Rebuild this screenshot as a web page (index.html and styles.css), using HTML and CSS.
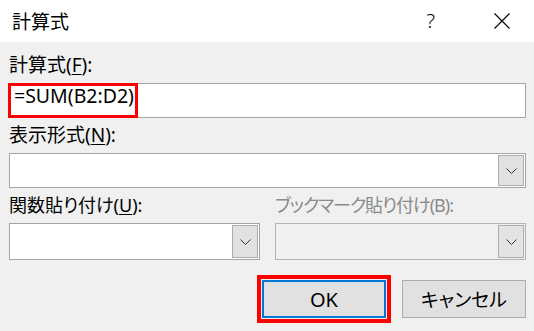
FILE: index.html
```html
<!DOCTYPE html>
<html lang="ja">
<head>
<meta charset="utf-8">
<title>計算式</title>
<link rel="stylesheet" href="styles.css">
</head>
<body>
<div class="dialog">
  <header class="titlebar">
    <span class="title">計算式</span>
    <span class="help">?</span>
    <span class="close"><svg width="16" height="16" viewBox="0 0 16 16"><path d="M0.5 0.5 L15.5 15.5 M15.5 0.5 L0.5 15.5" stroke="#000" stroke-width="1.1" fill="none"/></svg></span>
  </header>
  <main class="content">
    <label class="lbl">計算式(<u>F</u>):</label>
    <div class="field formula">
      <span class="value">=SUM(B2:D2)</span>
      <span class="mark"></span>
    </div>
    <label class="lbl">表示形式(<u>N</u>):</label>
    <div class="field combo">
      <span class="drop"><svg width="11" height="6" viewBox="0 0 11 6"><path d="M0.5 0.5 L5.5 5.5 L10.5 0.5" stroke="#333" stroke-width="1" fill="none"/></svg></span>
    </div>
    <div class="pair">
      <div class="col">
        <label class="lbl small">関数貼り付け(<u>U</u>):</label>
        <div class="field combo tall">
          <span class="drop"><svg width="11" height="6" viewBox="0 0 11 6"><path d="M0.5 0.5 L5.5 5.5 L10.5 0.5" stroke="#333" stroke-width="1" fill="none"/></svg></span>
        </div>
      </div>
      <div class="col disabled">
        <label class="lbl small tight">ブックマーク貼り付け(B):</label>
        <div class="field combo tall">
          <span class="drop"><svg width="11" height="6" viewBox="0 0 11 6"><path d="M0.5 0.5 L5.5 5.5 L10.5 0.5" stroke="#333" stroke-width="1" fill="none"/></svg></span>
        </div>
      </div>
    </div>
    <div class="buttons">
      <div class="focus-mark"><button class="btn default">OK</button></div>
      <button class="btn">キャンセル</button>
    </div>
  </main>
</div>
</body>
</html>
```
FILE: styles.css
```css
html, body {
  margin: 0;
  padding: 0;
}
body {
  width: 534px;
  height: 331px;
  overflow: hidden;
  font-family: "Noto Sans", "Noto Sans CJK JP", sans-serif;
  font-size: 19px;
  font-feature-settings: "palt";
  color: #000;
  background: #f0f0f0;
}
.dialog {
  width: 534px;
  height: 331px;
  background: #f0f0f0;
}
.titlebar {
  height: 42px;
  background: #fff;
  display: flex;
  align-items: center;
  padding-left: 12px;
}
.title {
  flex: 1;
}
.help {
  font-size: 20px;
  font-weight: 300;
  line-height: 20px;
}
.close {
  display: flex;
  margin-left: 59px;
  margin-right: 24px;
}
.content {
  padding: 6px 8px 0 9px;
}
.lbl {
  display: block;
  height: 35px;
  line-height: 35px;
  white-space: nowrap;
}
.lbl.small {
  font-size: 18px;
}
.lbl.tight {
  letter-spacing: -1px;
}
.lbl u {
  text-decoration-thickness: 1px;
  text-underline-offset: 2px;
}
.field {
  box-sizing: border-box;
  height: 35px;
  border: 1px solid #a5a5a5;
  background: #fff;
}
.formula {
  position: relative;
  padding-left: 4px;
}
.formula .value {
  display: block;
  font-size: 19.5px;
  line-height: 24px;
  font-feature-settings: normal;
}
.mark {
  position: absolute;
  left: -2px;
  top: -1px;
  width: 130px;
  height: 35px;
  box-sizing: border-box;
  border: 3px solid #ff0000;
}
.combo {
  display: flex;
  justify-content: flex-end;
  padding: 1px;
}
.combo.tall {
  height: 37px;
}
.drop {
  box-sizing: border-box;
  width: 26px;
  height: 100%;
  border: 1px solid #adadad;
  background: #e1e1e1;
  display: flex;
  align-items: center;
  justify-content: center;
}
.pair {
  display: grid;
  grid-template-columns: 251px 251px;
  column-gap: 15px;
}
.disabled .lbl {
  color: #8a8a8a;
}
.disabled .field {
  background: #f0f0f0;
  border-color: #b4b4b4;
}
.disabled .drop {
  background: #e3e3e3;
}
.buttons {
  display: flex;
  justify-content: flex-end;
  align-items: center;
  gap: 11px;
  margin-top: 15px;
}
.focus-mark {
  box-sizing: border-box;
  width: 134px;
  height: 48px;
  border: 4px solid #ff0000;
  padding: 1px;
}
.btn {
  box-sizing: border-box;
  width: 124px;
  height: 38px;
  margin: 0;
  padding: 0;
  border: 1px solid #adadad;
  background: #e1e1e1;
  font-family: "Noto Sans", "Noto Sans CJK JP", sans-serif;
  font-size: 19px;
  font-feature-settings: "palt";
  color: #000;
}
.btn.default {
  border: 2px solid #0078d7;
  font-size: 20px;
}
```
